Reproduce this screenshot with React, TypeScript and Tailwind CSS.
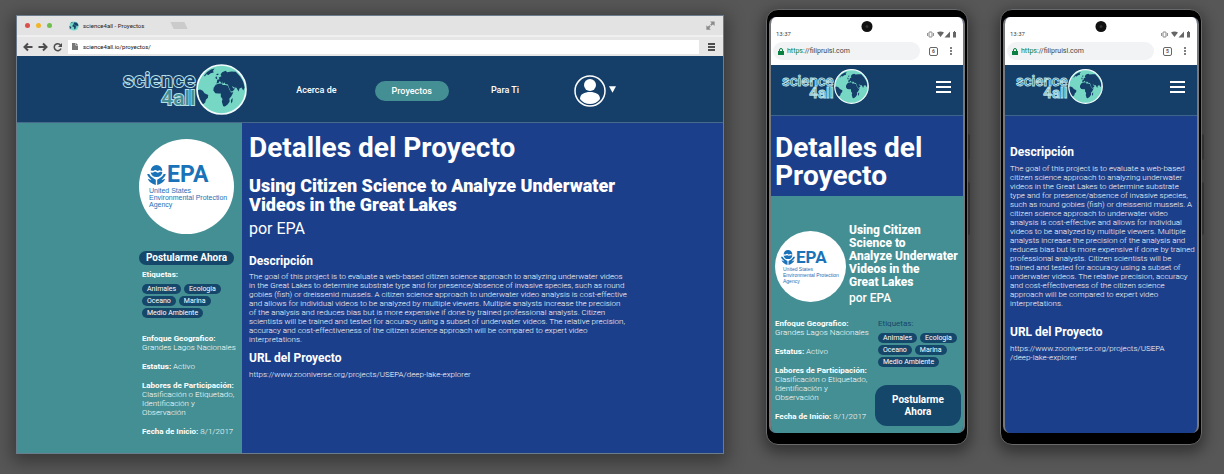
import React from "react";

const description =
  "The goal of this project is to evaluate a web-based citizen science approach to analyzing underwater videos\nin the Great Lakes to determine substrate type and for presence/absence of invasive species, such as round\ngobies (fish) or dreissenid mussels. A citizen science approach to underwater video analysis is cost-effective\nand allows for individual videos to be analyzed by multiple viewers. Multiple analysts increase the precision\nof the analysis and reduces bias but is more expensive if done by trained professional analysts. Citizen\nscientists will be trained and tested for accuracy using a subset of underwater videos. The relative precision,\naccuracy and cost-effectiveness of the citizen science approach will be compared to expert video\ninterpretations.";

const descriptionNarrow =
  "The goal of this project is to evaluate a web-based\ncitizen science approach to analyzing underwater\nvideos in the Great Lakes to determine substrate\ntype and for presence/absence of invasive species,\nsuch as round gobies (fish) or dreissenid mussels. A\ncitizen science approach to underwater video\nanalysis is cost-effective and allows for individual\nvideos to be analyzed by multiple viewers. Multiple\nanalysts increase the precision of the analysis and\nreduces bias but is more expensive if done by trained\nprofessional analysts. Citizen scientists will be\ntrained and tested for accuracy using a subset of\nunderwater videos. The relative precision, accuracy\nand cost-effectiveness of the citizen science\napproach will be compared to expert video\ninterpretations.";

function Globe({ className }: { className: string }) {
  return (
    <svg viewBox="0 0 150 150" className={className} aria-hidden="true">
      <circle cx="75" cy="75" r="72" fill="#76d7c4" />
      <g fill="#153f68">
        <path d="M4 77 L12 75 L20 79 L25 86 L36 91 L35 99 L29 105 L27 113 L20 119 L16 126 L11 118 Z" />
        <path d="M23 35 L32 24 L44 16 L55 13 L50 20 L52 25 L43 27 L37 32 L30 30 L27 36 Z" />
        <path d="M59 30 L65 28 L67 31 L62 33 Z M57 39 L60 36 L63 42 L59 45 Z" />
        <path d="M62 51 L62 46 L69 45 L67 40 L75 36 L72 31 L77 24 L87 20 L92 24 L104 22 L117 23 L130 37 L139 52 L143 69 L139 78 L134 69 L128 72 L125 81 L119 70 L112 69 L106 65 L109 71 L115 72 L108 80 L102 81 L97 69 L94 60 L86 59 L84 54 L81 58 L76 50 L79 58 L74 55 L70 50 L66 56 L60 57 Z" />
        <path d="M58 61 L66 58 L76 57 L78 62 L86 62 L94 64 L98 75 L103 84 L110 83 L104 95 L98 102 L99 110 L93 119 L85 125 L80 124 L76 111 L78 103 L73 96 L73 87 L65 87 L57 86 L51 78 L52 70 Z" />
        <path d="M103 105 L108 100 L107 110 L103 116 Z" />
      </g>
      <circle cx="75" cy="75" r="72" fill="none" stroke="#f2fbfd" strokeWidth="5" />
    </svg>
  );
}

function Brand({ small = false }: { small?: boolean }) {
  return (
    <a href="#inicio" aria-label="science4all" className="flex items-center">
      <span
        className={
          small
            ? "flex flex-col items-end text-[15px] leading-[12px] font-medium text-[#153f68] [-webkit-text-stroke:1px_#b4dfe6]"
            : "flex flex-col items-end text-[21px] leading-[18px] font-medium text-[#153f68] [-webkit-text-stroke:2px_#b4dfe6] [paint-order:stroke]"
        }
      >
        <span>science</span>
        <span className="text-[#448f94]">4all</span>
      </span>
      <Globe className={small ? "size-[35px]" : "ml-px size-[51px]"} />
    </a>
  );
}

function EpaFlower({ className }: { className: string }) {
  return (
    <svg viewBox="0 0 54 58" className={className} aria-hidden="true" fill="#1a72b8">
      <path d="M10 17 A17 17 0 0 1 44 17 L40 17 C36 12 32 20 27 16 C22 12 18 20 14 16 Z" />
      <path d="M10 21 C17 25 21 17 27 21 C33 25 37 17 44 21 A17 17 0 0 1 27 35 A17 17 0 0 1 10 21 Z" />
      <path d="M0 26 L6 26 C11 36 19 38 25 43 L25 58 C14 55 4 48 2 40 L13 44 C8 38 1 34 0 26 Z" />
      <path d="M54 26 L48 26 C43 36 35 38 29 43 L29 58 C40 55 50 48 52 40 L41 44 C46 38 53 34 54 26 Z" />
    </svg>
  );
}

function EpaBadge({ small = false }: { small?: boolean }) {
  return (
    <div
      className={
        small
          ? "flex size-[71px] shrink-0 flex-col rounded-full bg-white pt-[18px] pl-[6px] text-[#1a72b8]"
          : "flex size-[95px] shrink-0 flex-col rounded-full bg-white pt-[25px] pl-[8px] text-[#1a72b8]"
      }
    >
      <div className="flex items-center gap-px">
        <EpaFlower className={small ? "h-[15px] w-[14px]" : "h-[20px] w-[19px]"} />
        <span
          className={
            small
              ? "text-[17px] leading-[16px] font-bold"
              : "text-[23px] leading-[21px] font-bold"
          }
        >
          EPA
        </span>
      </div>
      <p
        className={
          small
            ? "pt-px pl-[2px] font-['Liberation_Sans',sans-serif] text-[5px] leading-[6px] whitespace-pre"
            : "pt-[2px] pl-[2px] font-['Liberation_Sans',sans-serif] text-[7px] leading-[7px] whitespace-pre"
        }
      >
        {"United States\nEnvironmental Protection\nAgency"}
      </p>
    </div>
  );
}

function Tags() {
  const rows = [["Animales", "Ecologia"], ["Oceano", "Marina"], ["Medio Ambiente"]];
  return (
    <ul className="flex flex-col gap-[2px]">
      {rows.map((row) => (
        <li key={row[0]} className="flex gap-[3px]">
          {row.map((tag) => (
            <a
              key={tag}
              href="#etiquetas"
              className="rounded-full bg-[#15476b] px-[5px] text-[7px] leading-[10px] whitespace-nowrap text-white"
            >
              {tag}
            </a>
          ))}
        </li>
      ))}
    </ul>
  );
}

function Facts() {
  const facts = [
    { label: "Enfoque Geografico:", value: "\nGrandes Lagos Nacionales" },
    { label: "Estatus:", value: " Activo" },
    { label: "Labores de Participación:", value: "\nClasificación o Etiquetado,\nIdentificación y\nObservación" },
    { label: "Fecha de Inicio:", value: " 8/1/2017" },
  ];
  return (
    <div className="flex flex-col gap-[10px] text-[8px] leading-[9px] whitespace-pre text-white">
      {facts.map((f) => (
        <p key={f.label}>
          <strong className="font-bold">{f.label}</strong>
          <span className="font-light">{f.value}</span>
        </p>
      ))}
    </div>
  );
}

function BrowserWindow() {
  return (
    <section className="flex min-w-0 flex-1 flex-col self-stretch border border-[#6b7d8c] bg-[#1c3f8b] shadow-[0_4px_16px_4px_rgba(0,0,0,0.35)]">
      <div className="flex h-[19px] items-center bg-[#e3e3e3] pr-2 pl-2">
        <div className="flex gap-[6px]">
          <span className="size-[5px] rounded-full bg-[#dd4f48]" />
          <span className="size-[5px] rounded-full bg-[#f0b429]" />
          <span className="size-[5px] rounded-full bg-[#6fbf4b]" />
        </div>
        <Globe className="ml-[17px] size-[10px]" />
        <span className="ml-1 text-[6px] leading-[10px] text-[#222]">science4all - Proyectos</span>
        <span className="ml-7 h-[7px] w-[14px] skew-x-[25deg] bg-[#cbcbcb]" />
        <svg viewBox="0 0 24 24" className="ml-auto size-[9px]" fill="#8a8a8a" stroke="#8a8a8a" strokeWidth="5" aria-hidden="true">
          <path d="M11 1h12v12z M13 23H1V11z" stroke="none" />
          <path d="M19 5l-6 6 M5 19l6-6" />
        </svg>
      </div>
      <div className="flex h-[21px] items-center border-t-2 border-[#efefef] bg-[#e6e6e6] pr-2 pl-[6px]">
        <div className="flex w-[45px] gap-[5px]">
          <button aria-label="Atrás">
            <svg viewBox="0 0 20 20" className="size-[10px]" fill="none" stroke="#4d4d4d" strokeWidth="4"><path d="M19 10H4 M10 3L3 10l7 7" /></svg>
          </button>
          <button aria-label="Adelante">
            <svg viewBox="0 0 20 20" className="size-[10px]" fill="none" stroke="#4d4d4d" strokeWidth="4"><path d="M1 10h15 M10 3l7 7-7 7" /></svg>
          </button>
          <button aria-label="Recargar">
            <svg viewBox="0 0 20 20" className="size-[10px]" fill="none" stroke="#4d4d4d" strokeWidth="3"><path d="M15 6A7 7 0 1 0 16 13" /><path d="M18 2v8h-8z" fill="#4d4d4d" stroke="none" /></svg>
          </button>
        </div>
        <div className="flex h-[14px] min-w-0 flex-1 items-center gap-[5px] bg-white pl-1">
          <svg viewBox="0 0 12 14" className="h-[7px] w-[6px]" fill="#777" aria-hidden="true"><path d="M0 0h7v5h5v9H0z M8 0l4 4H8z" /></svg>
          <input aria-label="Dirección" defaultValue="science4all.io/proyectos/" className="h-[10px] min-w-0 flex-1 text-[6px] leading-[10px] text-[#111] outline-none" />
        </div>
        <button aria-label="Menú del navegador" className="ml-[9px] flex flex-col gap-px">
          <span className="h-[2px] w-[7px] bg-[#4d4d4d]" />
          <span className="h-[2px] w-[7px] bg-[#4d4d4d]" />
          <span className="h-[2px] w-[7px] bg-[#4d4d4d]" />
        </button>
      </div>

      <header className="flex h-[67px] items-center border-b border-[#47698a] bg-[#153f68] pl-[106px]">
        <Brand />
        <div className="flex items-center pt-1">
          <nav className="ml-[49px] flex items-center text-[9px] font-medium text-white">
            <a href="#acerca">Acerca de</a>
            <a href="#proyectos" className="ml-[38px] rounded-full bg-[#448f94] px-[17px] leading-[20px]">Proyectos</a>
            <a href="#parati" className="ml-[42px]">Para Ti</a>
          </nav>
          <button aria-label="Cuenta" className="ml-[55px] flex items-center gap-[3px]">
            <svg viewBox="0 0 64 64" className="size-[32px]" fill="white">
              <circle cx="32" cy="32" r="30" fill="none" stroke="white" strokeWidth="3" />
              <circle cx="32" cy="20" r="12" />
              <path d="M12 48C12 38 21 34 32 34s20 4 20 14c-4 6-12 10-20 10s-16-4-20-10z" />
            </svg>
            <svg viewBox="0 0 14 13" className="mb-[3px] h-[7px] w-[7px]" fill="white"><path d="M0 0h14L7 13z" /></svg>
          </button>
        </div>
      </header>

      <div className="flex flex-1">
        <aside className="flex w-[225px] shrink-0 flex-col bg-[#448f94] pt-4 pl-[122px]">
          <EpaBadge />
          <button className="mt-[17px] h-[14px] w-[95px] rounded-full bg-[#15476b] text-[10px] leading-[14px] font-bold text-white">
            Postularme Ahora
          </button>
          <div className="flex flex-col pt-[5px] pl-[3px]">
            <h3 className="pb-[5px] text-[8px] leading-[9px] font-bold text-white">Etiquetas:</h3>
            <Tags />
            <div className="pt-4">
              <Facts />
            </div>
          </div>
        </aside>
        <main className="min-w-0 flex-1 pt-[10px] pl-[7px] text-white">
          <h1 className="text-[28px] leading-[30px] font-bold">Detalles del Proyecto</h1>
          <h2 className="mt-[13px] text-[18px] leading-[19px] font-black whitespace-pre">
            {"Using Citizen Science to Analyze Underwater\nVideos in the Great Lakes"}
          </h2>
          <p className="mt-[5px] text-[16px] leading-[20px]">por EPA</p>
          <h3 className="mt-[15px] text-[12px] leading-[14px] font-bold">Descripción</h3>
          <p className="mt-[4px] text-[8px] leading-[9px] font-light whitespace-pre">{description}</p>
          <h3 className="mt-[7px] text-[12px] leading-[14px] font-bold">URL del Proyecto</h3>
          <a href="https://www.zooniverse.org/projects/USEPA/deep-lake-explorer" className="mt-[5px] block text-[8px] leading-[9px] font-light">
            https://www.zooniverse.org/projects/USEPA/deep-lake-explorer
          </a>
        </main>
      </div>
    </section>
  );
}

function Phone({ tabs, children }: { tabs: string; children: React.ReactNode }) {
  return (
    <section className="relative flex w-[202px] shrink-0 flex-col self-stretch rounded-[12px] border border-[#68696b] bg-black px-[2px] pt-[7px] pb-[11px] shadow-[0_5px_14px_3px_rgba(0,0,0,0.4)]">
      <span className="absolute top-[124px] -right-[3px] h-[26px] w-[2px] rounded-r bg-[#333]" />
      <span className="absolute top-[172px] -right-[3px] h-[53px] w-[2px] rounded-r bg-[#333]" />
      <div className="relative flex flex-1 flex-col overflow-hidden rounded-[7px] border-x-2 border-[#77787c] bg-[#1c3f8b]">
        <span className="absolute top-[4px] left-1/2 flex size-[11px] -translate-x-1/2 items-center justify-center rounded-full bg-[#111]">
          <span className="size-[3px] rounded-full bg-[#333]" />
        </span>
        <div className="flex h-[48px] flex-col bg-white px-[2px]">
          <div className="flex h-[25px] items-end justify-between pr-[4px] pb-[4px] pl-[3px] text-[6px] leading-[8px] text-[#444]">
            <span>13:37</span>
            <svg viewBox="0 0 60 14" className="h-[7px] w-[30px]" fill="#666" aria-hidden="true">
              <rect x="4" y="2" width="6" height="10" rx="1" fill="none" stroke="#666" strokeWidth="1.6" />
              <path d="M1 4v6 M13 4v6" stroke="#666" strokeWidth="1.4" />
              <path d="M20 3q7-4 14 0l-7 9z M46 1v12H35z M52 2h2V0h2v2h2v11h-6z" />
            </svg>
          </div>
          <div className="flex items-center">
            <div className="flex h-[18px] min-w-0 flex-1 items-center gap-[3px] rounded-full bg-[#f1f3f4] pl-[5px]">
              <svg viewBox="0 0 12 14" className="h-[7px] w-[6px]" fill="#0b8043" aria-hidden="true">
                <path d="M0 6h12v8H0z" />
                <path d="M3 7V4a3 3 0 0 1 6 0v3" fill="none" stroke="#0b8043" strokeWidth="2" />
              </svg>
              <a href="https://filipruisl.com" className="text-[7px] leading-[10px] text-[#444]">
                <span className="text-[#0b8043]">https</span>://filipruisl.com
              </a>
            </div>
            <button aria-label="Pestañas" className="ml-[9px] size-[9px] rounded-[2px] border border-[#666] text-[5px] leading-[7px] font-bold text-[#555]">
              {tabs}
            </button>
            <button aria-label="Más opciones" className="mr-[9px] ml-[12px] flex flex-col gap-px">
              <span className="size-[2px] rounded-full bg-[#555]" />
              <span className="size-[2px] rounded-full bg-[#555]" />
              <span className="size-[2px] rounded-full bg-[#555]" />
            </button>
          </div>
        </div>
        <header className="flex h-[51px] items-start justify-between border-b border-[#3f648c] bg-[#153f68] pt-[4px] pr-3 pl-[11px]">
          <Brand small />
          <button aria-label="Menú" className="mt-[12px] flex flex-col gap-[3px]">
            <span className="h-[2px] w-[15px] bg-white" />
            <span className="h-[2px] w-[15px] bg-white" />
            <span className="h-[2px] w-[15px] bg-white" />
          </button>
        </header>
        {children}
      </div>
    </section>
  );
}

export default function App() {
  return (
    <div className="flex min-h-screen items-stretch bg-[#575757] pr-[22px] pl-4 font-['Roboto',sans-serif]">
      <div className="flex min-w-0 flex-1 pt-[15px] pb-[20px]">
        <BrowserWindow />
      </div>
      <div className="ml-[42px] flex gap-[32px] pt-[9px] pb-[29px]">
        <Phone tabs="6">
          <h1 className="h-[80px] pt-[18px] pl-[4px] text-[28px] leading-[28px] font-bold whitespace-pre text-white">
            {"Detalles del\nProyecto"}
          </h1>
          <div className="flex flex-1 flex-col bg-[#448f94] pl-[4px] text-white">
            <div className="flex gap-[3px] pt-[28px]">
              <div className="pt-[7px]">
                <EpaBadge small />
              </div>
              <div>
                <h2 className="text-[12px] leading-[13px] font-extrabold whitespace-pre">
                  {"Using Citizen\nScience to\nAnalyze Underwater\nVideos in the\nGreat Lakes"}
                </h2>
                <p className="mt-[2px] text-[12px] leading-[14px] font-medium">por EPA</p>
              </div>
            </div>
            <div className="flex pt-[14px]">
              <div className="w-[100px] shrink-0">
                <Facts />
              </div>
              <div className="flex flex-1 flex-col pr-[2px]">
                <h3 className="pb-[5px] pl-[3px] text-[8px] leading-[9px] text-[#15476b]">Etiquetas:</h3>
                <div className="pl-[3px]">
                  <Tags />
                </div>
                <button className="mt-[18px] h-[41px] rounded-[12px] bg-[#15476b] text-[10px] leading-[12px] font-bold whitespace-pre text-white">
                  {"Postularme\nAhora"}
                </button>
              </div>
            </div>
          </div>
        </Phone>
        <Phone tabs="5">
          <div className="flex flex-col pt-[29px] pl-[5px] text-white">
            <h3 className="text-[12px] leading-[14px] font-bold">Descripción</h3>
            <p className="mt-[5px] text-[8px] leading-[9px] font-light whitespace-pre">{descriptionNarrow}</p>
            <h3 className="mt-[17px] text-[12px] leading-[14px] font-bold">URL del Proyecto</h3>
            <a href="https://www.zooniverse.org/projects/USEPA/deep-lake-explorer" className="mt-[5px] text-[8px] leading-[9px] font-light whitespace-pre">
              {"https://www.zooniverse.org/projects/USEPA\n/deep-lake-explorer"}
            </a>
          </div>
        </Phone>
      </div>
    </div>
  );
}
